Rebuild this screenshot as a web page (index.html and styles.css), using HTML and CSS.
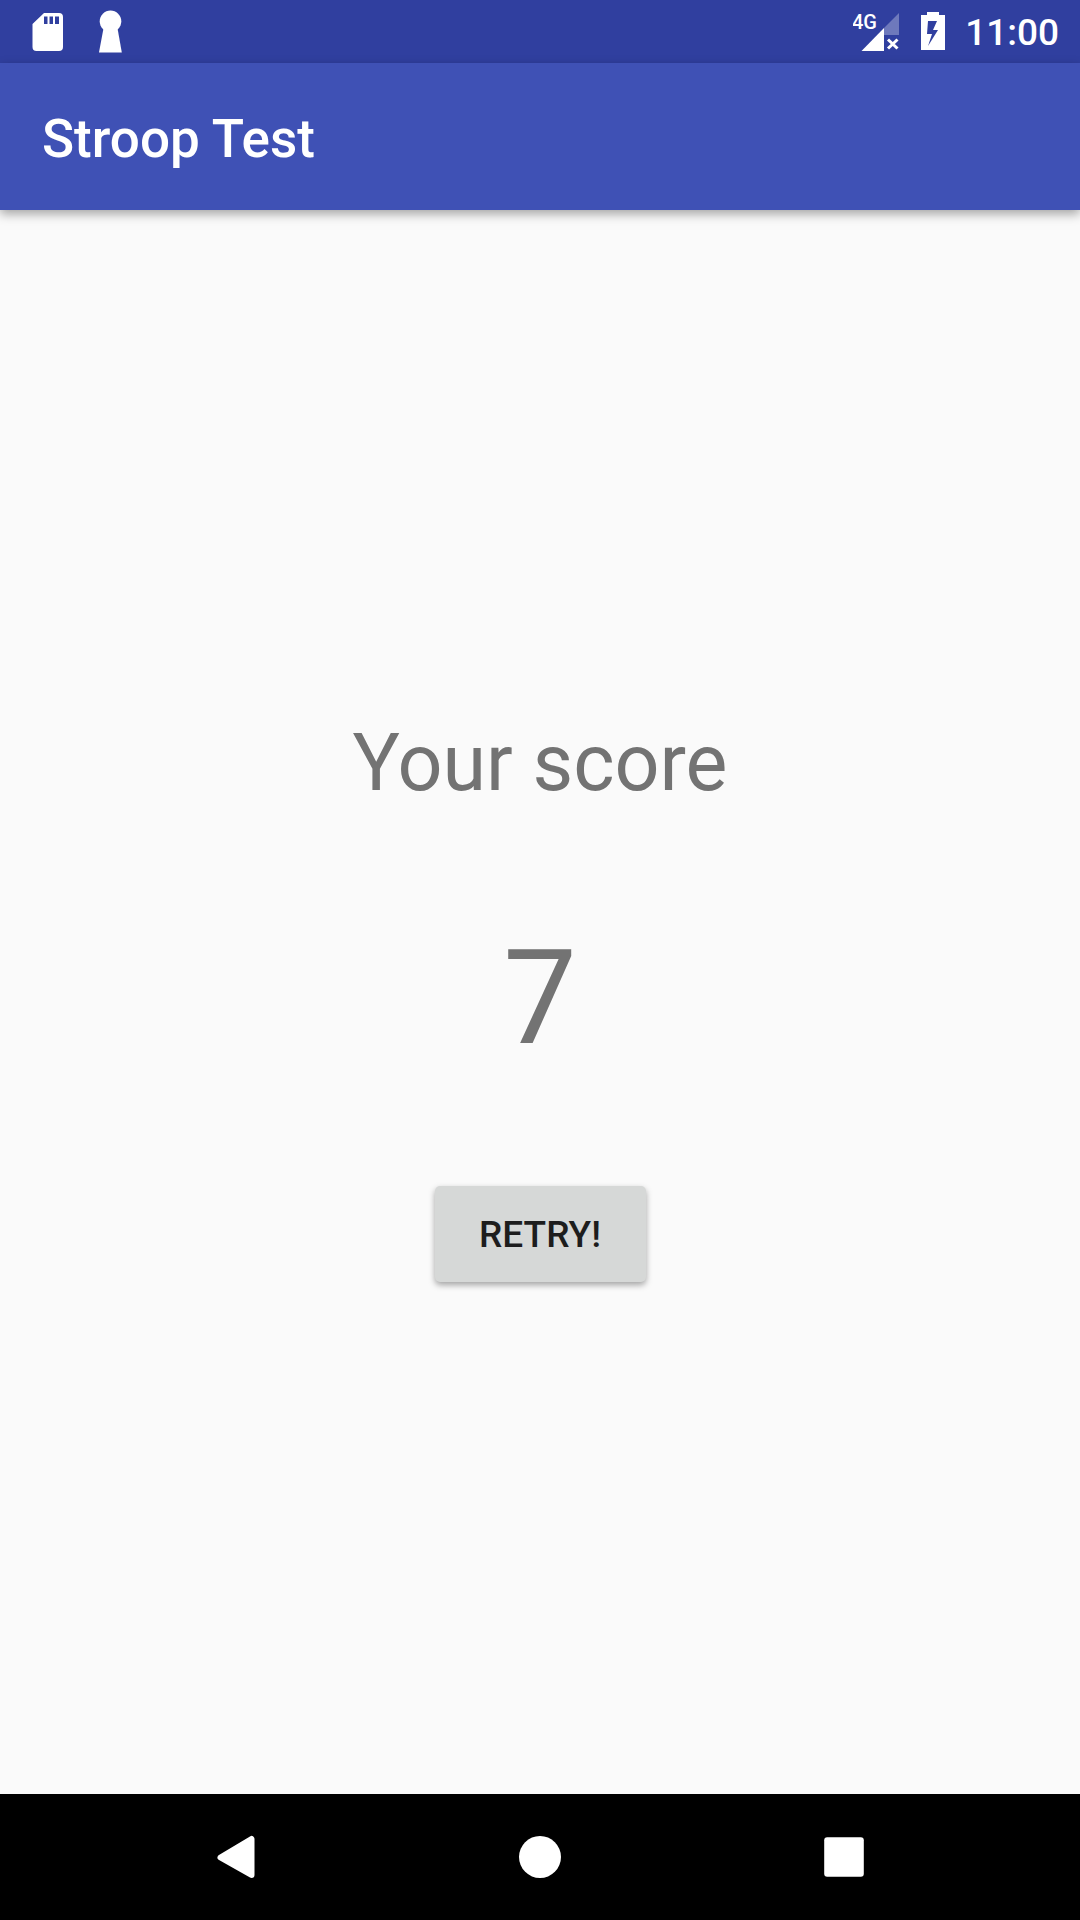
FILE: index.html
```html
<!DOCTYPE html>
<html lang="en">
<head>
  <meta charset="utf-8">
  <meta name="viewport" content="width=device-width, initial-scale=1">
  <title>Stroop Test</title>
  <link rel="stylesheet" href="styles.css">
</head>
<body>
  <div class="screen">
    <div class="status-bar">
      <div class="status-group">
        <svg class="status-icon" width="32" height="44" viewBox="32 10 32 44" role="img" aria-label="SD card">
          <path fill="#fff" fill-rule="evenodd" d="M44 13H59Q63 13 63 17V47Q63 51 59 51H36.500Q32.500 51 32.500 47V24ZM44 16.500V24H47.500V16.500ZM49.500 16.500V24H53V16.500ZM55 16.500V24H59V16.500Z"/>
        </svg>
        <svg class="status-icon" width="24" height="44" viewBox="98 10 24 44" role="img" aria-label="Keyhole">
          <circle cx="110.500" cy="21.300" r="10.800" fill="#fff"/>
          <path fill="#fff" d="M104 27H117L118 31L121.800 52.500H99L103 31Z"/>
        </svg>
      </div>
      <div class="status-group status-right">
        <svg class="status-icon" width="48" height="44" viewBox="855 10 48 44" role="img" aria-label="4G signal, no data">
          <path fill="#fff" fill-opacity=".3" d="M901 13V35H886V28Z"/>
          <path fill="#fff" d="M886 28V51H863.500Z"/>
          <path stroke="#fff" stroke-width="3" d="M890 39.500L899.500 48.500M899.500 39.500L890 48.500"/>
          <text class="network" x="854" y="29">4G</text>
        </svg>
        <svg class="status-icon" width="24" height="44" viewBox="922 10 24 44" role="img" aria-label="Battery charging">
          <path fill="#fff" fill-rule="evenodd" d="M928 12H940V15H946V50H922V15H928ZM929 21L928 34H933L929 46L939 30H934L938 21Z"/>
        </svg>
        <time class="clock">11:00</time>
      </div>
    </div>

    <header class="app-bar">
      <h1 class="app-title">Stroop Test</h1>
    </header>

    <main class="content">
      <p class="score-label">Your score</p>
      <p class="score">7</p>
      <button class="retry" type="button">RETRY!</button>
    </main>

    <nav class="nav-bar">
      <button class="nav-button" type="button" aria-label="Back">
        <svg width="48" height="48" viewBox="212 1833 48 48"><path fill="#fff" stroke="#fff" stroke-width="6" stroke-linejoin="round" d="M220.500 1857.500L251.500 1839V1875Z"/></svg>
      </button>
      <button class="nav-button" type="button" aria-label="Home">
        <svg width="48" height="48" viewBox="0 0 48 48"><circle cx="24" cy="24" r="21" fill="#fff"/></svg>
      </button>
      <button class="nav-button" type="button" aria-label="Recent apps">
        <svg width="48" height="48" viewBox="0 0 48 48"><rect x="4.200" y="4.200" width="39.600" height="39.600" rx="3" fill="#fff"/></svg>
      </button>
    </nav>
  </div>
</body>
</html>
```
FILE: styles.css
```css
* {
  box-sizing: border-box;
}

body {
  margin: 0;
  font-family: Roboto, "Liberation Sans", sans-serif;
  background: #fafafa;
}

.screen {
  display: flex;
  flex-direction: column;
  min-height: 100vh;
}

.status-bar {
  display: flex;
  justify-content: space-between;
  align-items: center;
  height: 63px;
  padding: 0 21px 0 32px;
  background: #303f9f;
  color: #fff;
}

.status-group {
  display: flex;
  align-items: center;
  gap: 34px;
}

.status-right {
  gap: 20px;
}

.status-icon {
  display: block;
}

.network {
  fill: #fff;
  font-size: 20px;
  font-weight: 500;
}

.clock {
  padding-top: 2px;
  font-size: 37px;
  font-weight: 500;
  line-height: 44px;
}

.app-bar {
  display: flex;
  align-items: center;
  height: 147px;
  padding: 4px 42px 0;
  background: #3f51b5;
  color: #fff;
  box-shadow: 0 4px 10px rgba(0, 0, 0, 0.35);
}

.app-title {
  margin: 0;
  font-size: 53px;
  font-weight: 500;
  line-height: 62px;
}

.content {
  flex: 1;
  display: flex;
  flex-direction: column;
  align-items: center;
  justify-content: center;
  gap: 111px;
  padding-bottom: 6px;
  color: #737373;
}

.score-label,
.score {
  margin: 0;
}

.score-label {
  font-size: 79px;
  line-height: 93px;
}

.score {
  font-size: 131px;
  line-height: 154px;
}

.retry {
  min-width: 211px;
  height: 96px;
  padding: 2px 24px 0;
  border: 0;
  border-radius: 5px;
  background: #d6d8d7;
  color: #1d1d1d;
  font-family: inherit;
  font-size: 37px;
  font-weight: 500;
  box-shadow: 0 3px 6px rgba(0, 0, 0, 0.35);
}

.nav-bar {
  display: flex;
  height: 126px;
  padding: 0 84px;
  background: #000;
}

.nav-button {
  flex: 1;
  display: flex;
  align-items: center;
  justify-content: center;
  padding: 0;
  border: 0;
  background: none;
}
```
